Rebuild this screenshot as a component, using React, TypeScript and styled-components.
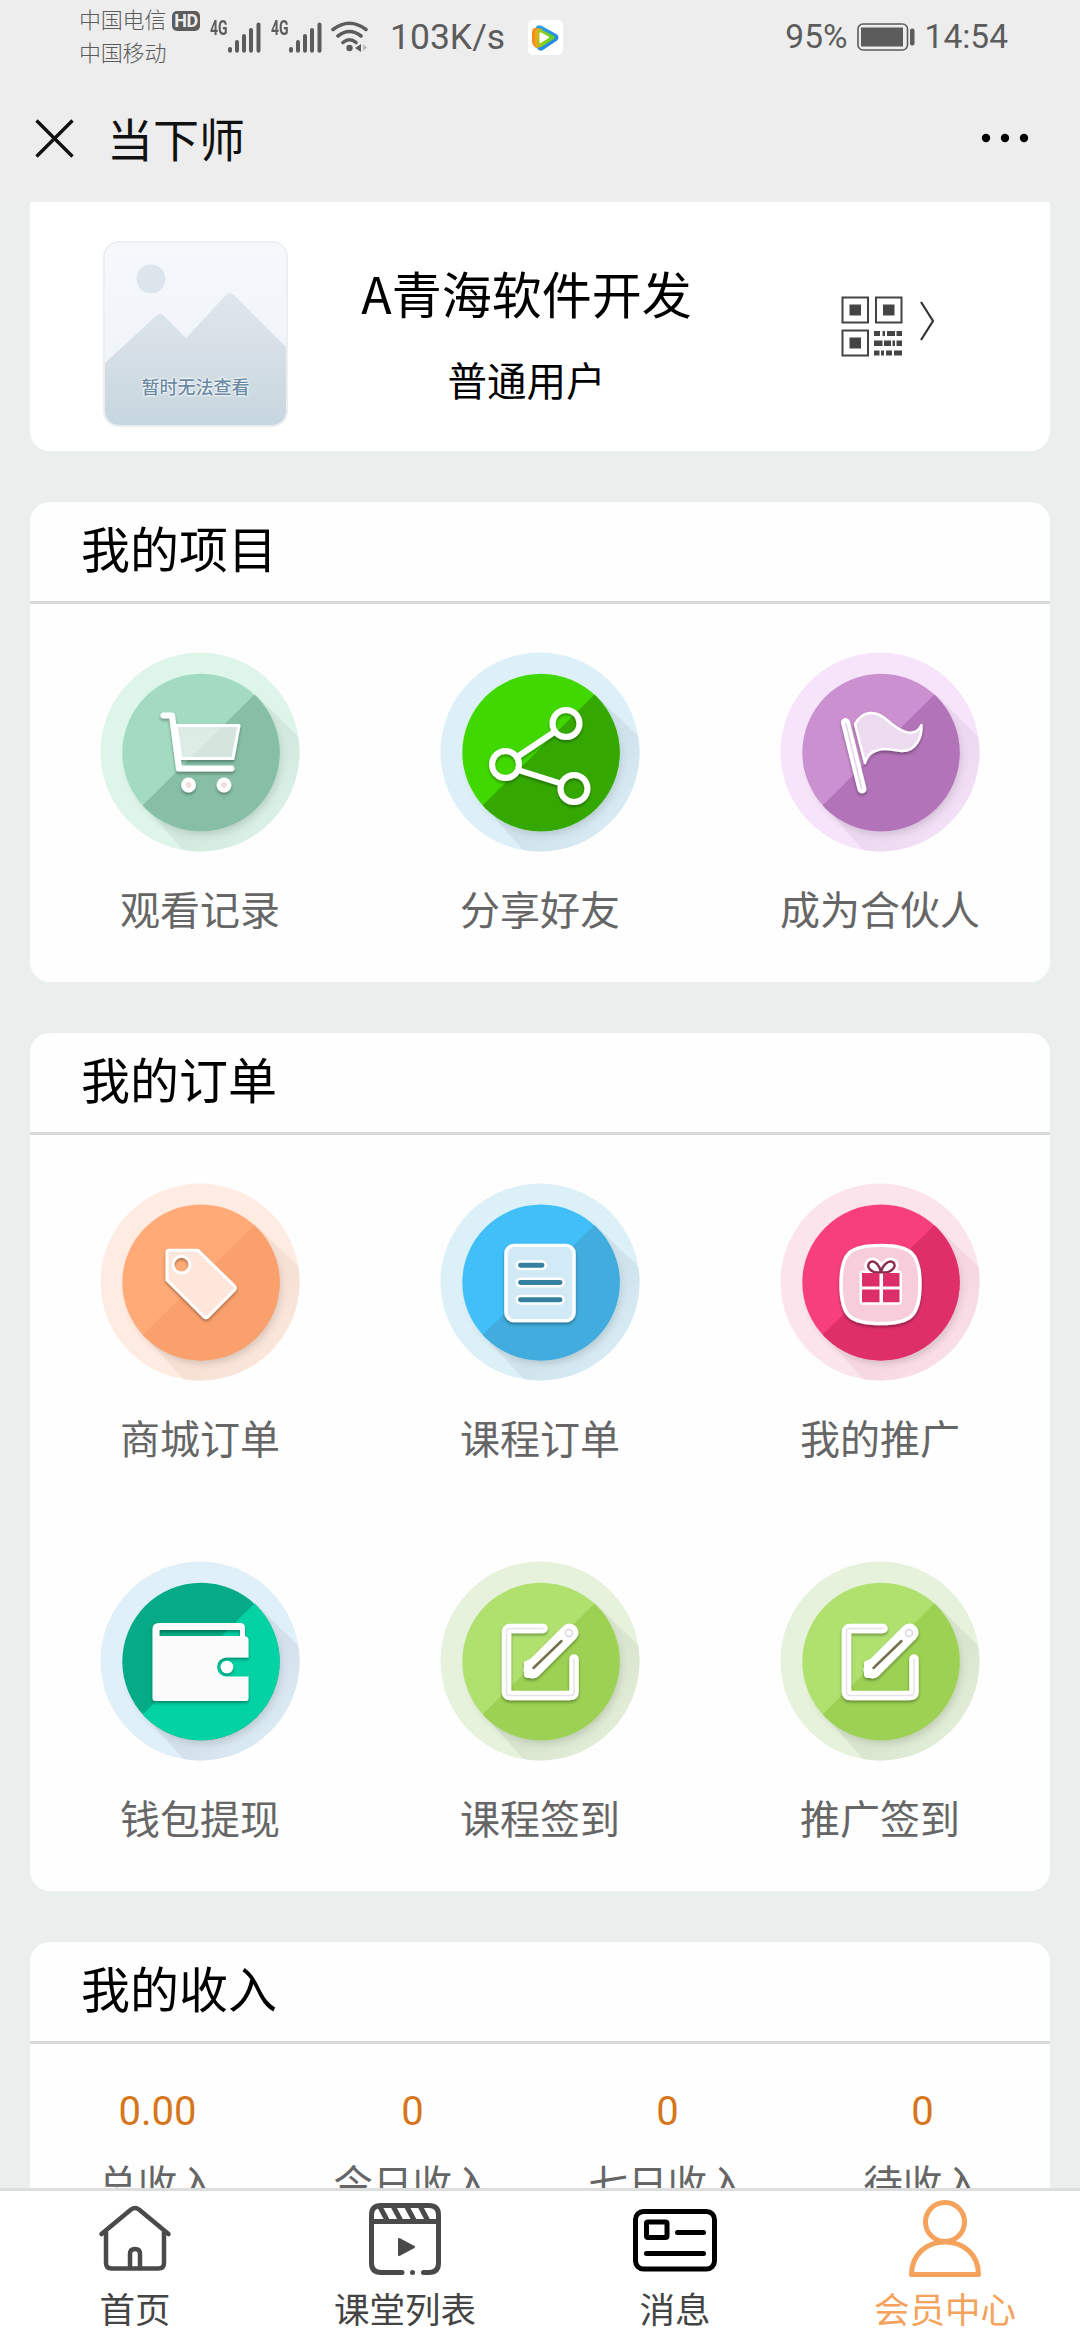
import React from "react";
import styled, { createGlobalStyle } from "styled-components";

const GlobalStyle = createGlobalStyle`
  * { box-sizing: border-box; }
  html, body { margin: 0; padding: 0; background: #eaeeed; }
  body { font-family: "Noto Sans CJK SC", sans-serif; color: #000; }
  svg { display: block; flex: none; }
`;

const Screen = styled.div`
  width: 1080px;
  height: 2340px;
  display: flex;
  flex-direction: column;
  overflow: hidden;
  background: #eaeeed;
`;

const TopArea = styled.header`
  flex: none;
  height: 202px;
  background: #ededed;
`;

const StatusBar = styled.div`
  height: 74px;
  display: flex;
  align-items: center;
  padding: 0 72px 0 79px;
  color: #5c5c5c;
`;

const Carriers = styled.div`
  display: flex;
  flex-direction: column;
  margin-top: -4px;
  font-size: 22px;
  font-weight: 300;
  line-height: 33px;
  letter-spacing: -0.2px;
  width: 93px;
`;

const HdBadge = styled.span`
  align-self: flex-start;
  margin-top: 11px;
  width: 28px;
  height: 20px;
  border-radius: 5px;
  background: #5c5c5c;
  color: #ededed;
  font: 700 18px/20px Roboto, sans-serif;
  letter-spacing: -0.5px;
  text-align: center;
`;

const Signal = styled.div<{ $gap: number }>`
  display: flex;
  align-items: flex-start;
  margin-left: ${(p) => p.$gap}px;
`;

const NetType = styled.span`
  width: 18px;
  font: 700 20px/20px Roboto, sans-serif;
  transform: scaleX(0.7);
  transform-origin: left;
  margin-top: -4px;
`;

const StatusText = styled.span<{ $size: number; $left: number; $tracking?: number }>`
  font-family: Roboto, sans-serif;
  font-size: ${(p) => p.$size}px;
  line-height: 44px;
  letter-spacing: ${(p) => p.$tracking ?? 0}px;
  margin-left: ${(p) => p.$left}px;
  white-space: nowrap;
`;

const AppBadge = styled.div`
  margin-left: 23px;
  width: 35px;
  height: 35px;
  border-radius: 5px;
  background: #fff;
`;

const Spacer = styled.div`
  flex: 1;
`;

const TitleBar = styled.div`
  height: 128px;
  display: flex;
  align-items: center;
  padding: 0 51px 0 35px;
`;

const PageTitle = styled.h1`
  margin: -2px 0 0 33px;
  font-size: 46px;
  line-height: 60px;
  font-weight: 400;
  color: #111;
`;

const Content = styled.main`
  flex: 1;
  min-height: 0;
  overflow: hidden;
  padding: 0 30px;
  display: flex;
  flex-direction: column;
`;

const Card = styled.section`
  flex: none;
  background: #fefefe;
  border-radius: 20px;
  margin-top: 51px;
`;

const ProfileCard = styled.section`
  flex: none;
  height: 249px;
  display: flex;
  align-items: flex-start;
  padding: 39px 73px 0;
  background: #fff;
  border-radius: 0 0 20px 20px;
`;

const Avatar = styled.div`
  display: grid;
  width: 185px;
  height: 186px;
  border: 2px solid #eceeef;
  border-radius: 16px;
  overflow: hidden;

  > * { grid-area: 1 / 1; }
`;

const AvatarNote = styled.span`
  align-self: end;
  justify-self: center;
  margin-bottom: 24px;
  font-size: 18px;
  font-weight: 500;
  line-height: 30px;
  color: #6b8aa3;
  text-shadow: 0 0 2px #fff, 0 0 2px #fff, 0 0 3px #fff;
`;

const Identity = styled.div`
  width: 477px;
  padding-top: 20px;
  text-align: center;
`;

const Nickname = styled.div`
  font-size: 50px;
  line-height: 62px;
`;

const Role = styled.div`
  margin-top: 31px;
  font-size: 39.5px;
  line-height: 50px;
`;

const QrLink = styled.div`
  display: flex;
  align-items: flex-start;
  gap: 17px;
  margin: 55px 0 0 76px;
`;

const Chevron = styled.svg`
  margin-top: 5px;
`;

const CardTitle = styled.h2`
  margin: 0;
  height: 102px;
  padding-left: 51px;
  border-bottom: 3px solid #dadada;
  font-size: 49px;
  font-weight: 400;
  line-height: 90px;
`;

const IconGrid = styled.div`
  display: grid;
  grid-template-columns: repeat(3, 1fr);
  row-gap: 94px;
  padding: 48px 0 44px;
`;

const Entry = styled.div`
  display: flex;
  flex-direction: column;
  align-items: center;
  color: #666;
  font-size: 40px;
  line-height: 60px;
`;

const EntryLabel = styled.span`
  margin-top: 26px;
`;

const IncomeRow = styled.div`
  display: grid;
  grid-template-columns: repeat(4, 1fr);
  padding-top: 38px;
  text-align: center;
`;

const Amount = styled.div`
  font: 400 40px/60px Roboto, sans-serif;
  color: #d5761c;
`;

const IncomeLabel = styled.div`
  margin-top: 10px;
  font-size: 39.5px;
  line-height: 60px;
  color: #666;
`;

const TabBar = styled.nav`
  flex: none;
  height: 152px;
  display: grid;
  grid-template-columns: repeat(4, 1fr);
  background: #fff;
  border-top: 3px solid #dddfdf;
`;

const Tab = styled.div<{ $active?: boolean }>`
  display: flex;
  flex-direction: column;
  align-items: center;
  padding-top: 5px;
  font-size: 35.5px;
  line-height: 46px;
  color: ${(p) => (p.$active ? "#f5a25c" : "#444")};
`;

const TabLabel = styled.span`
  margin-top: -3px;
`;

/* ---------- status bar drawings ---------- */

const Bars = () => (
  <svg width="33" height="31" viewBox="0 0 33 31" stroke="#5c5c5c" strokeWidth="4" strokeLinecap="round">
    <path d="M2 27v1.800M9 20v8.800M16 14v14.800M23 8v20.800M30.500 2.500v26.300" />
  </svg>
);

const Wifi = () => (
  <svg width="37" height="32" viewBox="0 0 37 32" fill="none" stroke="#5c5c5c" strokeWidth="3.600" strokeLinecap="round">
    <path d="M2 8.500Q18.500-4 35 8.500M7 15Q18.500 6 30 15M12 21.500Q18.500 16 25 21.500" />
    <circle cx="18.500" cy="27" r="3.200" fill="#5c5c5c" stroke="none" />
    <path d="M30 23v8l-6-4z" fill="#5c5c5c" stroke="none" />
    <path d="M32 23v7l4-3.500z" fill="#bbb" stroke="none" />
  </svg>
);

const PlayLogo = () => (
  <svg width="35" height="35" viewBox="0 0 35 35">
    <defs>
      <linearGradient id="play-rim" x1="0" y1="0" x2="1" y2="1">
        <stop offset="0" stopColor="#2aa6e8" />
        <stop offset="1" stopColor="#1f7fe0" />
      </linearGradient>
      <linearGradient id="play-body" x1="0" y1="0" x2="1" y2="0">
        <stop offset="0" stopColor="#f2a81c" />
        <stop offset="0.35" stopColor="#8fcf1e" />
        <stop offset="1" stopColor="#5fcb2a" />
      </linearGradient>
    </defs>
    <path d="M8 7Q9 4 14 6L29 14.500Q32 17.500 29 20.500L15 30Q11 32 9 28Z" fill="url(#play-rim)" />
    <path d="M4 12Q5 7 9 8L14 9V26L9 28Q5 27 4 22Z" fill="#ff8a1c" />
    <path d="M7 11Q8 8 12 9L26 16Q28 17.500 26 19L13 27Q8 28 7 24Z" fill="url(#play-body)" />
    <path d="M12.500 13.500L20 17.500L12.500 22Z" fill="#fff" stroke="#fff" strokeWidth="2" strokeLinejoin="round" />
  </svg>
);

const Battery = () => (
  <svg width="58" height="28" viewBox="0 0 58 28">
    <rect x="1" y="1" width="49.500" height="26" rx="5" fill="none" stroke="#5c5c5c" strokeWidth="1.600" />
    <rect x="4" y="4.500" width="42" height="19" fill="#5c5c5c" />
    <rect x="53" y="5.500" width="4.500" height="17" rx="2" fill="#5c5c5c" />
  </svg>
);

/* ---------- profile drawings ---------- */

const Landscape = () => (
  <svg width="181" height="182" viewBox="0 0 181 182">
    <defs>
      <linearGradient id="sky" x1="0" y1="0" x2="0" y2="1">
        <stop offset="0" stopColor="#f5f9fc" />
        <stop offset="1" stopColor="#eef2f8" />
      </linearGradient>
      <linearGradient id="hill" x1="0" y1="0" x2="0" y2="1">
        <stop offset="0" stopColor="#dfe6ee" />
        <stop offset="0.4" stopColor="#d7e0e7" />
        <stop offset="1" stopColor="#c6d6df" />
      </linearGradient>
    </defs>
    <rect width="181" height="182" fill="url(#sky)" />
    <circle cx="46" cy="36" r="14.500" fill="#dce4ec" />
    <path d="M0 120L52 72Q55 69 58 72L81 95L121 52Q125 48 129 52L181 104V182H0Z" fill="url(#hill)" />
  </svg>
);

const QrMark = () => (
  <svg width="62" height="61" viewBox="0 0 62 61">
    <g fill="none" stroke="#444" strokeWidth="2">
      <rect x="1.500" y="1.500" width="25.500" height="25" />
      <rect x="35" y="1.500" width="25.500" height="25" />
      <rect x="1.500" y="34.500" width="25.500" height="25" />
    </g>
    <g fill="#444">
      <rect x="8.500" y="8.500" width="11.500" height="11" />
      <rect x="42" y="8.500" width="11.500" height="11" />
      <rect x="8.500" y="41.500" width="11.500" height="11" />
      <path d="M33 35h6v5h-6zM41.500 35h2.500v5h-2.500zM46 35h8v5h-8zM55.500 35h5.500v5h-5.500zM33 44.500h8.500v5.500h-8.500zM43 44.500h7v5.500h-7zM51.500 44.500h2.500v5.500h-2.500zM55.500 44.500h5.500v5.500h-5.500zM33 54.500h5.500v5h-5.500zM40 54.500h3v5h-3zM45 54.500h6v5h-6zM53 54.500h8v5h-8z" />
    </g>
  </svg>
);

/* ---------- round entry icons ---------- */

interface DiscProps {
  id: string;
  ring: string;
  shade: string;
  light: string;
  dark: string;
  height?: number;
  children: React.ReactNode;
}

const Disc = ({ id, ring, shade, light, dark, height = 200, children }: DiscProps) => (
  <svg width="200" height={height} viewBox="0 0 200 200" preserveAspectRatio="none">
    <defs>
      <clipPath id={`${id}-ring`}>
        <circle cx="100" cy="100" r="99.500" />
      </clipPath>
      <clipPath id={`${id}-face`}>
        <circle cx="101" cy="100.500" r="78.700" />
      </clipPath>
      <linearGradient id={`${id}-cast`} x1="0.2" y1="0.2" x2="0.9" y2="0.9">
        <stop offset="0" stopColor={shade} />
        <stop offset="0.5" stopColor={shade} />
        <stop offset="1" stopColor={ring} />
      </linearGradient>
      <filter id={`${id}-soft`} x="-20%" y="-20%" width="140%" height="140%">
        <feGaussianBlur stdDeviation="4" />
      </filter>
      <filter id={`${id}-drop`} x="-20%" y="-20%" width="140%" height="150%">
        <feDropShadow dx="0" dy="2" stdDeviation="1.500" floodColor="#000" floodOpacity="0.35" />
      </filter>
    </defs>
    <circle cx="100" cy="100" r="99.500" fill={ring} />
    <g clipPath={`url(#${id}-ring)`}>
      <path d="M155 42L210 96V210H94L44 154Z" fill={`url(#${id}-cast)`} />
      <circle cx="104" cy="106" r="76" fill="#000" opacity="0.14" filter={`url(#${id}-soft)`} />
    </g>
    <g clipPath={`url(#${id}-face)`}>
      <rect width="200" height="200" fill={light} />
      <path d="M156 41L200 0V200H0L42 154Z" fill={dark} />
    </g>
    <g filter={`url(#${id}-drop)`}>{children}</g>
  </svg>
);

const CartIcon = () => (
  <Disc id="cart" ring="#def5ea" shade="#d2eade" light="#a2dbc1" dark="#86bfa6">
    <path d="M76 73.500H139L133 106.500H81Z" fill="#fff" fillOpacity="0.65" stroke="#fff" strokeWidth="3" strokeLinejoin="round" />
    <path d="M63.500 63.500H72L79 116.500H131.500" fill="none" stroke="#fff" strokeWidth="6" strokeLinecap="round" strokeLinejoin="round" />
    <g fill="#f3dfe0" stroke="#fff" strokeWidth="4.500">
      <circle cx="88.500" cy="133" r="5.200" />
      <circle cx="124" cy="133" r="5.200" />
    </g>
  </Disc>
);

const ShareIcon = () => (
  <Disc id="share" ring="#ddf0f8" shade="#d0e3ec" light="#41d800" dark="#34a801">
    <g fill="none" stroke="#fff" strokeWidth="6">
      <circle cx="65.500" cy="112.500" r="13.500" />
      <circle cx="126" cy="71.500" r="13.500" />
      <circle cx="134" cy="136.500" r="13.500" />
      <path d="M77 105L115 79.500M78 118L121 131.500" />
    </g>
  </Disc>
);

const FlagIcon = () => (
  <Disc id="flag" ring="#f6e5fa" shade="#ecd8f0" light="#cb90cf" dark="#b373b9">
    <path d="M75 72C83 58 96 58 107 68C118 78 134 88 141.500 73C142 84 137 99 122 99C113 99 107 95 98 98C90 100 87 104 85 111Z" fill="#eddcef" stroke="#fff" strokeWidth="2.500" strokeLinejoin="round" />
    <path d="M65.500 70.500L82 137" stroke="#fff" strokeWidth="9" strokeLinecap="round" />
    <path d="M66 72L81.500 136" stroke="#e3d3e6" strokeWidth="1.500" strokeLinecap="round" />
  </Disc>
);

const TagIcon = () => (
  <Disc id="tag" height={198} ring="#feebe1" shade="#f6dfd3" light="#ffaa77" dark="#faa06c">
    <path fillRule="evenodd" d="M69 68H98L134.500 104Q136 106 134.500 108L108 135Q106 137 104 135L67 98V70Q67 68 69 68ZM73 82.500a8.500 8.500 0 1 0 17 0a8.500 8.500 0 1 0-17 0Z" fill="#fee6da" stroke="#fff" strokeWidth="3" strokeLinejoin="round" />
  </Disc>
);

const DocIcon = () => (
  <Disc id="doc" height={198} ring="#dcf0f8" shade="#cfe3ec" light="#41bff8" dark="#41acdd">
    <rect x="66" y="63" width="68" height="76" rx="8" fill="#d2eaf5" stroke="#fff" strokeWidth="3.500" />
    <path d="M80.500 83H102M80.500 100.500H120M80.500 118H120" stroke="#fff" strokeWidth="10" strokeLinecap="round" />
    <path d="M80.500 83H102M80.500 100.500H120M80.500 118H120" stroke="#35819f" strokeWidth="5" strokeLinecap="round" />
  </Disc>
);

const GiftIcon = () => (
  <Disc id="gift" height={198} ring="#fce4ed" shade="#f5d6e1" light="#f83f7d" dark="#df2f69">
    <path d="M101 63C130 63 140 70 140 102C140 135 130 142 101 142C70 142 61 135 61 102C61 70 70 63 101 63Z" fill="#f7cddb" stroke="#fff" strokeWidth="3.500" />
    <path d="M101 90C91 92 85 84 90 80C95 77 100 84 101 90C102 84 108 77 113 80C118 84 111 92 101 90Z" fill="none" stroke="#fff" strokeWidth="8" />
    <rect x="79.500" y="88.500" width="42.500" height="34.500" rx="3" fill="#fff" />
    <path d="M101 90C91 92 85 84 90 80C95 77 100 84 101 90C102 84 108 77 113 80C118 84 111 92 101 90Z" fill="#fff" stroke="#8d2d50" strokeWidth="2.500" />
    <path d="M82 91H99.500V104.500H82ZM103 91H119.500V104.500H103ZM82 107.500H99.500V120.500H82ZM103 107.500H119.500V120.500H103Z" fill="#dc2d68" />
  </Disc>
);

const WalletIcon = () => (
  <Disc id="wallet" ring="#dff0f8" shade="#d3e1ea" light="#05ab86" dark="#03d2a4">
    <path fillRule="evenodd" d="M59 62H140Q145 62 145 67V75Q148.500 76 148.500 79V96.500H126.500A9.500 9.500 0 0 0 126.500 115.500H148.500V137Q148.500 140 146 140H55Q52.500 140 52.500 137V68Q52.500 62 59 62ZM59.500 69V75H140V69Z" fill="#fbfbfb" />
    <circle cx="127" cy="106" r="6.300" fill="#fff" />
  </Disc>
);

const EditIcon = ({ id }: { id: string }) => (
  <Disc id={id} ring="#e6f2db" shade="#d9e5ce" light="#b0e16f" dark="#9cd154">
    <g fill="none" strokeLinecap="round">
      <path d="M103 67.500H70Q66.500 67.500 66.500 71V131Q66.500 134.500 70 134.500H130Q134 134.500 134 131V98" stroke="#fff" strokeWidth="9.500" />
      <path d="M103 67.500H70Q66.500 67.500 66.500 71V131Q66.500 134.500 70 134.500H130Q134 134.500 134 131V98" stroke="#e7e2ea" strokeWidth="1.500" />
      <path d="M129.500 71.500L92.500 108.500" stroke="#fff" strokeWidth="18" />
      <path d="M84 101V113Q84 117 88 117H96L104 109L92 97Z" fill="#fff" />
      <path d="M121.500 80L93.500 107" stroke="#77704d" strokeWidth="2.500" />
      <circle cx="129" cy="72" r="3.500" stroke="#ddd5e4" strokeWidth="1.500" />
    </g>
  </Disc>
);

/* ---------- tab bar drawings ---------- */

const HomeGlyph = () => (
  <svg width="90" height="92" viewBox="0 0 90 92" fill="none" stroke="#4a4a4a" strokeWidth="4.500" strokeLinecap="round" strokeLinejoin="round">
    <path d="M11.500 38L41 13.500Q45 10.500 49 13.500L78.500 38M16 36V67Q16 72.500 21.500 72.500H68.500Q74 72.500 74 67V36M40 72V58Q40 53 45 53Q50 53 50 58V72" />
  </svg>
);

const ClassGlyph = () => (
  <svg width="90" height="92" viewBox="0 0 90 92" fill="none" stroke="#4a4a4a" strokeWidth="5" strokeLinecap="round">
    <path d="M42 76.500H21Q11.500 76.500 11.500 67V19Q11.500 9.500 21 9.500H69Q78.500 9.500 78.500 19V67Q78.500 76.500 69 76.500H63.500" />
    <path d="M12 25.500H78M20 11L27 24M33.500 11L40.500 24M47 11L54 24M60.500 11L67.500 24" strokeLinecap="butt" />
    <circle cx="52.500" cy="76.500" r="2.500" fill="#4a4a4a" stroke="none" />
    <path d="M39 43V59L54 51Z" fill="#4a4a4a" strokeWidth="2" strokeLinejoin="round" />
  </svg>
);

const MessageGlyph = () => (
  <svg width="90" height="92" viewBox="0 0 90 92" fill="none" stroke="#000" strokeWidth="5" strokeLinecap="round" strokeLinejoin="round">
    <rect x="5.500" y="15.500" width="79" height="57.500" rx="8" />
    <rect x="16.500" y="26" width="20.500" height="15.500" rx="1.500" />
    <path d="M47.500 36.500H73.500M16.500 57.500H73.500" />
  </svg>
);

const MemberGlyph = () => (
  <svg width="90" height="92" viewBox="0 0 90 92" fill="none" stroke="#f5a25c" strokeWidth="5" strokeLinejoin="round">
    <circle cx="45" cy="26" r="19.500" />
    <path d="M11.500 78.500C11.500 59 26 46 45 46C64 46 78.500 59 78.500 78.500Z" />
  </svg>
);

const incomes = [
  { amount: "0.00", label: "总收入" },
  { amount: "0", label: "今日收入" },
  { amount: "0", label: "七日收入" },
  { amount: "0", label: "待收入" },
];

const projects = [
  { label: "观看记录", icon: <CartIcon /> },
  { label: "分享好友", icon: <ShareIcon /> },
  { label: "成为合伙人", icon: <FlagIcon /> },
];

const orders = [
  { label: "商城订单", icon: <TagIcon /> },
  { label: "课程订单", icon: <DocIcon /> },
  { label: "我的推广", icon: <GiftIcon /> },
  { label: "钱包提现", icon: <WalletIcon /> },
  { label: "课程签到", icon: <EditIcon id="course-sign" /> },
  { label: "推广签到", icon: <EditIcon id="promo-sign" /> },
];

const tabs = [
  { label: "首页", icon: <HomeGlyph /> },
  { label: "课堂列表", icon: <ClassGlyph /> },
  { label: "消息", icon: <MessageGlyph /> },
  { label: "会员中心", icon: <MemberGlyph />, active: true },
];

const EntryList = ({ items }: { items: { label: string; icon: React.ReactNode }[] }) => (
  <IconGrid>
    {items.map((item) => (
      <Entry key={item.label}>
        {item.icon}
        <EntryLabel>{item.label}</EntryLabel>
      </Entry>
    ))}
  </IconGrid>
);

export default function App() {
  return (
    <Screen>
      <GlobalStyle />
      <TopArea>
        <StatusBar>
          <Carriers>
            <span>中国电信</span>
            <span>中国移动</span>
          </Carriers>
          <HdBadge>HD</HdBadge>
          <Signal $gap={10}>
            <NetType>4G</NetType>
            <Bars />
          </Signal>
          <Signal $gap={10}>
            <NetType>4G</NetType>
            <Bars />
          </Signal>
          <Signal $gap={9}>
            <Wifi />
          </Signal>
          <StatusText $size={35.5} $left={22}>103K/s</StatusText>
          <AppBadge>
            <PlayLogo />
          </AppBadge>
          <Spacer />
          <StatusText $size={33.500} $left={0}>95%</StatusText>
          <StatusText as="div" $size={34} $left={9}>
            <Battery />
          </StatusText>
          <StatusText $size={33.500} $left={10}>14:54</StatusText>
        </StatusBar>
        <TitleBar>
          <svg width="39" height="39" viewBox="0 0 39 39" stroke="#111" strokeWidth="3.400">
            <path d="M1.500 1.500L37.500 37.500M37.500 1.500L1.500 37.500" />
          </svg>
          <PageTitle>当下师</PageTitle>
          <Spacer />
          <svg width="48" height="10" viewBox="0 0 48 10">
            <circle cx="5" cy="5" r="4.200" />
            <circle cx="24" cy="5" r="4.200" />
            <circle cx="43" cy="5" r="4.200" />
          </svg>
        </TitleBar>
      </TopArea>

      <Content>
        <ProfileCard>
          <Avatar>
            <Landscape />
            <AvatarNote>暂时无法查看</AvatarNote>
          </Avatar>
          <Identity>
            <Nickname>A青海软件开发</Nickname>
            <Role>普通用户</Role>
          </Identity>
          <QrLink>
            <QrMark />
            <Chevron width="15" height="40" viewBox="0 0 15 40" fill="none" stroke="#333" strokeWidth="2.200">
              <path d="M1 1L13 20L1 39" />
            </Chevron>
          </QrLink>
        </ProfileCard>

        <Card>
          <CardTitle>我的项目</CardTitle>
          <EntryList items={projects} />
        </Card>

        <Card>
          <CardTitle>我的订单</CardTitle>
          <EntryList items={orders} />
        </Card>

        <Card>
          <CardTitle>我的收入</CardTitle>
          <IncomeRow>
            {incomes.map((item) => (
              <div key={item.label}>
                <Amount>{item.amount}</Amount>
                <IncomeLabel>{item.label}</IncomeLabel>
              </div>
            ))}
          </IncomeRow>
        </Card>
      </Content>

      <TabBar>
        {tabs.map((tab) => (
          <Tab key={tab.label} $active={tab.active}>
            {tab.icon}
            <TabLabel>{tab.label}</TabLabel>
          </Tab>
        ))}
      </TabBar>
    </Screen>
  );
}
